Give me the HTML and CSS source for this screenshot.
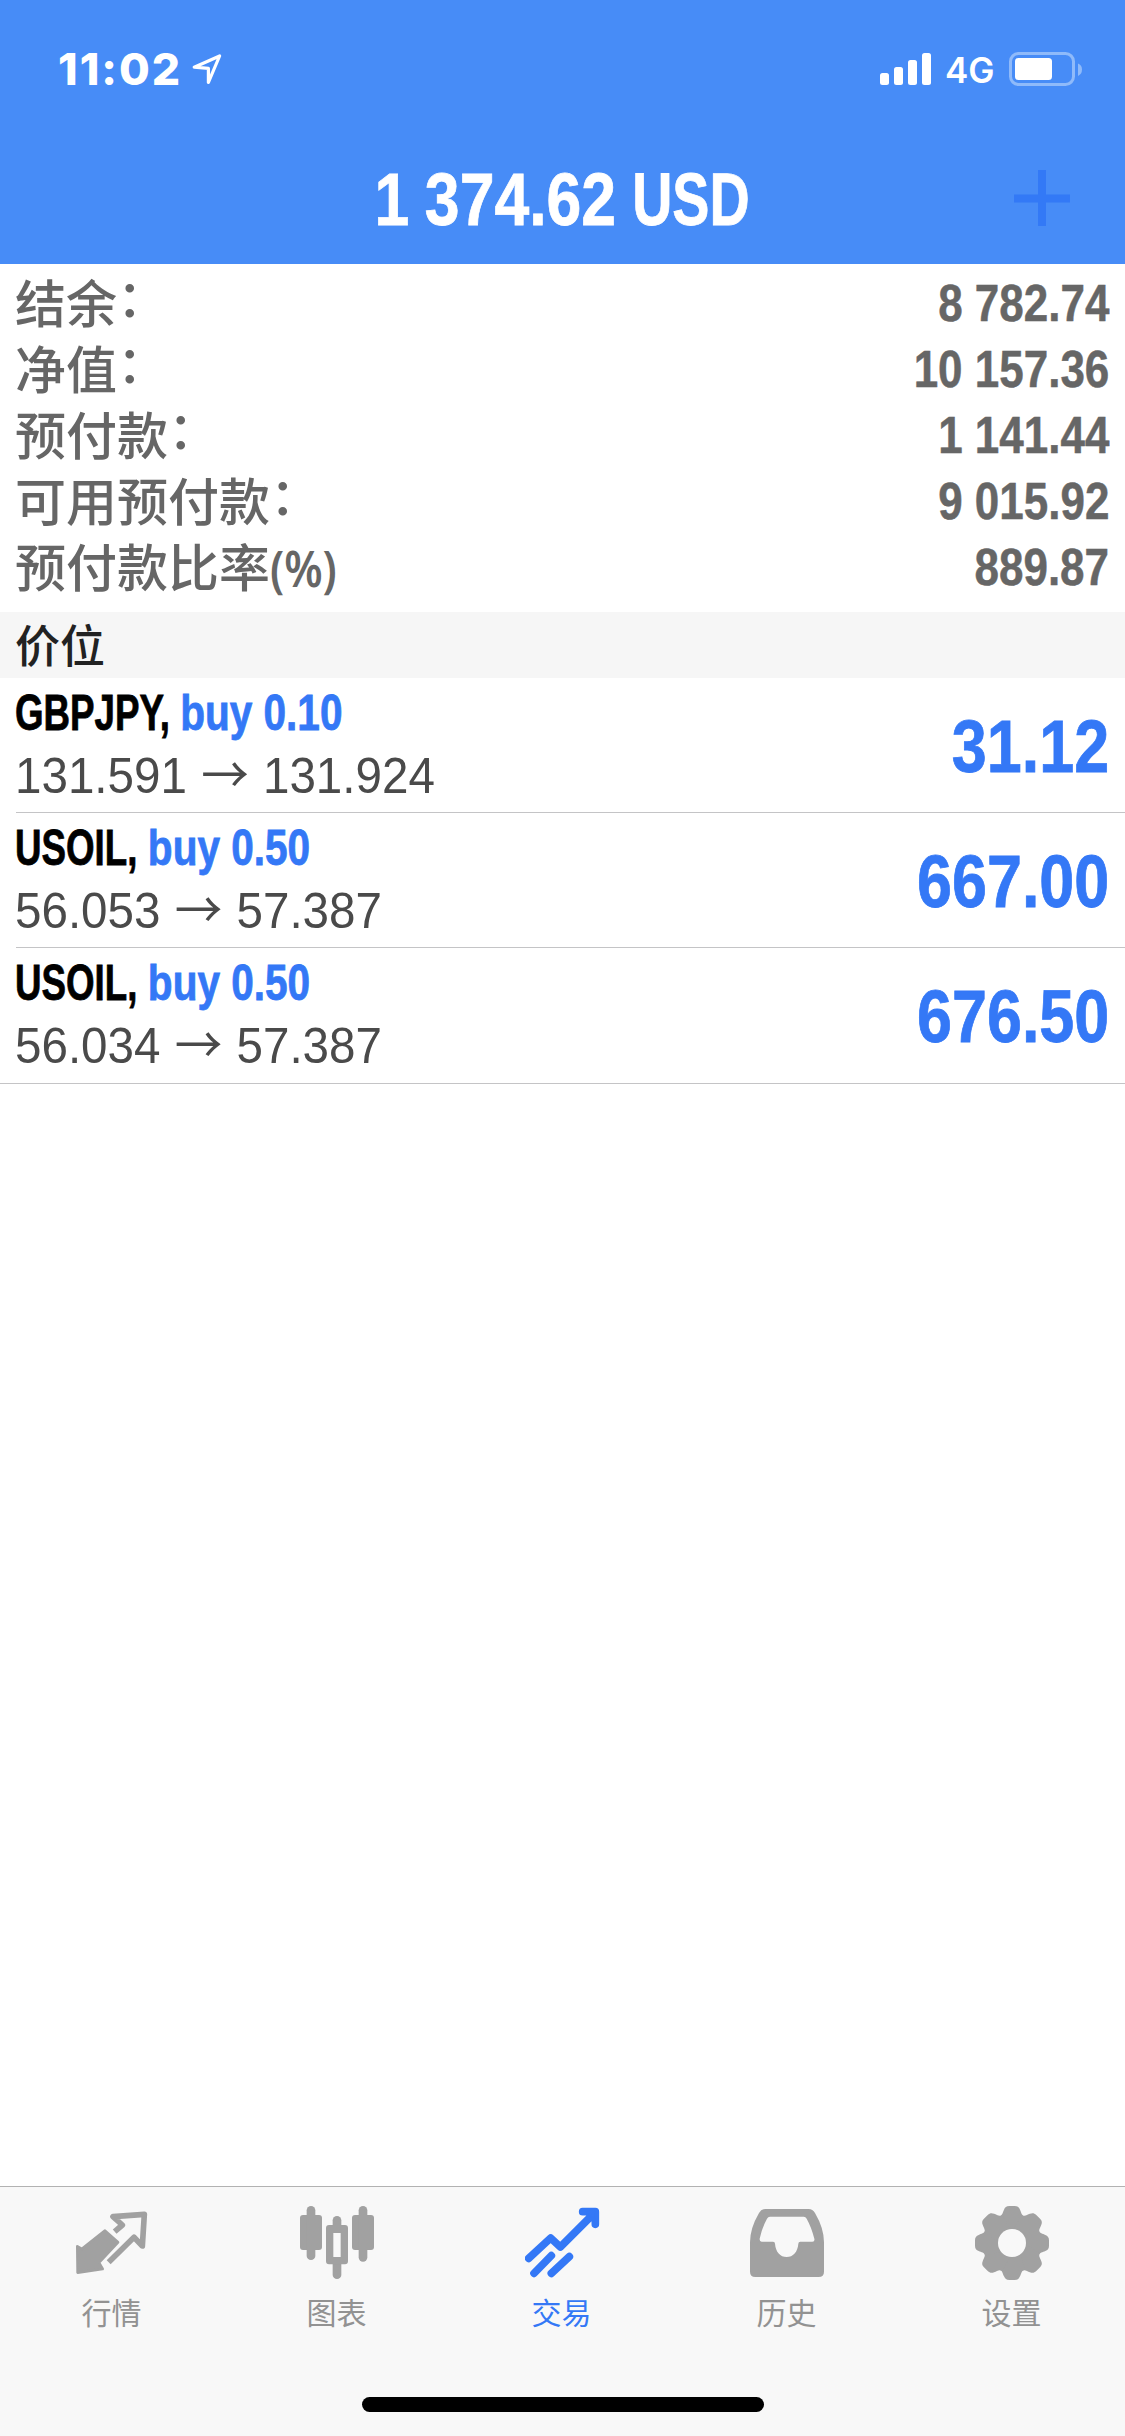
FILE: index.html
```html
<!DOCTYPE html>
<html lang="zh-CN">
<head>
<meta charset="utf-8">
<title>交易</title>
<link rel="stylesheet" href="styles.css">
</head>
<body>
<div class="app">
  <header class="header">
    <div class="status">
      <span class="clock">11:02</span>
      <svg class="location" viewBox="0 0 30 32" width="30" height="32"><path d="M2.2 14.2 27.6 3 16.4 29.4V15.4Z" fill="none" stroke="#fff" stroke-width="3.2" stroke-linejoin="round"/></svg>
      <svg class="signal" viewBox="0 0 52 32" width="52" height="32" fill="#fff"><rect x="0" y="20" width="9" height="12" rx="2.5"/><rect x="14" y="14" width="9" height="18" rx="2.5"/><rect x="28" y="7" width="9" height="25" rx="2.5"/><rect x="42" y="0" width="9" height="32" rx="2.5"/></svg>
      <span class="network">4G</span>
      <svg class="battery" viewBox="0 0 74 34" width="74" height="34"><rect x="1.5" y="1.5" width="63" height="31" rx="8" fill="none" stroke="#8fbafa" stroke-width="3"/><rect x="6" y="6" width="37" height="22" rx="3.5" fill="#fff"/><path d="M69 11.5Q73 13 73 17.5T69 24Z" fill="#8fbafa"/></svg>
    </div>
    <div class="nav">
      <h1 class="nav-title"><span class="condensed">1 374.62 <span class="currency">USD</span></span></h1>
      <svg class="add" viewBox="0 0 58 58" width="58" height="58"><path d="M29 1V57M1 29.500H57" stroke="#3379f6" stroke-width="8"/></svg>
    </div>
  </header>

  <section class="summary">
    <div class="line"><span class="label">结余<span class="colon">：</span></span><span class="amount">8 782.74</span></div>
    <div class="line"><span class="label">净值<span class="colon">：</span></span><span class="amount">10 157.36</span></div>
    <div class="line"><span class="label">预付款<span class="colon">：</span></span><span class="amount">1 141.44</span></div>
    <div class="line"><span class="label">可用预付款<span class="colon">：</span></span><span class="amount">9 015.92</span></div>
    <div class="line"><span class="label">预付款比率<span class="unit">(%)</span></span><span class="amount">889.87</span></div>
  </section>

  <h2 class="section-title">价位</h2>
  <ul class="deals">
    <li class="deal">
      <div class="info">
        <div class="name">GBPJPY, <span class="side">buy 0.10</span></div>
        <div class="prices">131.591<span class="to">→</span>131.924</div>
      </div>
      <div class="profit">31.12</div>
    </li>
    <li class="deal">
      <div class="info">
        <div class="name">USOIL, <span class="side">buy 0.50</span></div>
        <div class="prices">56.053<span class="to">→</span>57.387</div>
      </div>
      <div class="profit">667.00</div>
    </li>
    <li class="deal">
      <div class="info">
        <div class="name">USOIL, <span class="side">buy 0.50</span></div>
        <div class="prices">56.034<span class="to">→</span>57.387</div>
      </div>
      <div class="profit">676.50</div>
    </li>
  </ul>

  <footer class="footer">
    <nav class="tabs">
      <div class="tab">
        <svg class="icon" viewBox="0 0 225 225"><path d="M90 77 129 112 72 173 83 192 8 203 7 124 20 132Z" fill="currentColor" stroke="currentColor" stroke-width="8" stroke-linejoin="round"/><path d="M119 80 142 60 114 35 208 28 202 123 177 97 101 172" fill="none" stroke="currentColor" stroke-width="17" stroke-linejoin="round"/></svg>
        <span>行情</span>
      </div>
      <div class="tab">
        <svg class="icon" viewBox="0 0 225 225" fill="currentColor"><rect y="30" width="66" height="105" rx="9"/><rect x="20" y="3" width="26" height="162" rx="13"/><rect x="98" y="33" width="26" height="50" rx="13"/><rect x="98" y="160" width="26" height="62" rx="13"/><path fill-rule="evenodd" d="M87 60H135Q144 60 144 69V169Q144 178 135 178H87Q78 178 78 169V69Q78 60 87 60ZM100 84V156H122V84Z"/><rect x="156" y="30" width="66" height="105" rx="9"/><rect x="176" y="3" width="26" height="167" rx="13"/></svg>
        <span>图表</span>
      </div>
      <div class="tab active">
        <svg class="icon" viewBox="0 0 225 225" fill="none" stroke="currentColor" stroke-width="23" stroke-linecap="round" stroke-linejoin="round"><path d="M11 160 77 99 106 126 205 27M173 20H211V58M27 205 79 152M79 205 133 155"/><path d="M185 22H210V47Z" fill="currentColor" stroke-width="4"/></svg>
        <span>交易</span>
      </div>
      <div class="tab">
        <svg class="icon" viewBox="0 0 225 225" fill="currentColor"><path fill-rule="evenodd" d="M46 12H176Q188 12 195 24Q222 70 222 112V200Q222 216 206 216H16Q0 216 0 200V112Q0 70 27 24Q34 12 46 12ZM60 35Q54 35 51 41Q37 66 29 101Q28 110 35 110H69Q75 110 75 116C77 141 91 156 110 156S143 141 145 116Q145 110 151 110H187Q195 110 193 101Q184 66 170 41Q167 35 161 35Z"/></svg>
        <span>历史</span>
      </div>
      <div class="tab">
        <svg class="icon" viewBox="0 0 225 225" fill="currentColor"><defs><path id="tooth" d="M-38-80C-28-83-28-92-24-100C-21-107-17-111-8-111H8C17-111 21-107 24-100C28-92 28-83 38-80L28-38H-28Z"/></defs><g transform="translate(111 114)"><circle r="64" fill="none" stroke="currentColor" stroke-width="44"/><use href="#tooth"/><use href="#tooth" transform="rotate(45)"/><use href="#tooth" transform="rotate(90)"/><use href="#tooth" transform="rotate(135)"/><use href="#tooth" transform="rotate(180)"/><use href="#tooth" transform="rotate(225)"/><use href="#tooth" transform="rotate(270)"/><use href="#tooth" transform="rotate(315)"/><circle r="42" fill="#f8f8f8"/></g></svg>
        <span>设置</span>
      </div>
    </nav>
    <div class="home-indicator"></div>
  </footer>
</div>
</body>
</html>
```
FILE: styles.css
```css
* { box-sizing: border-box; margin: 0; padding: 0; }

body {
  width: 1125px;
  background: #fff;
  font-family: "Liberation Sans", "Noto Sans CJK SC", sans-serif;
}

.app { display: flex; flex-direction: column; height: 2436px; }

/* Header */
.header { height: 264px; background: #478cf7; color: #fff; }

.status {
  display: flex;
  align-items: center;
  height: 138px;
  padding: 0 42px 0 58px;
  font-family: Inter, "Liberation Sans", sans-serif;
}
.clock { width: 123px; font-size: 44.5px; font-weight: 800; line-height: 44px; letter-spacing: 2px; white-space: nowrap; }
.location { margin-left: 11px; }
.signal { margin-left: auto; }
.network { width: 50px; margin: 2px 14px 0 13px; font-size: 35px; font-weight: 600; line-height: 40px; white-space: nowrap; }

.nav {
  display: grid;
  grid-template-columns: 1fr auto 1fr;
  align-items: center;
  height: 120px;
  padding-right: 54px;
}
.nav-title { grid-column: 2; margin: 3px 0 0 53px; font-size: 74px; line-height: 84px; white-space: nowrap; }
.condensed { display: block; word-spacing: -2px; transform: scaleX(0.845); -webkit-text-stroke: 0.8px; }
.currency { display: inline-block; margin-right: -17px; transform: scaleX(0.89); transform-origin: left; }
.add { justify-self: end; }

/* Account summary */
.summary { height: 348px; padding: 6px 16px 0 15px; color: #666; }
.line { display: flex; justify-content: space-between; height: 66px; line-height: 66px; white-space: nowrap; }
.label { margin-top: -2px; font-family: "Noto Sans CJK SC", sans-serif; font-size: 51px; font-weight: 500; }
.colon { display: inline-block; transform: translateY(-6px); }
.unit { display: inline-block; font-family: "Noto Sans", sans-serif; font-size: 51px; font-weight: 600; transform: scaleX(0.86); transform-origin: left; }
.amount { font-size: 52px; font-weight: 700; transform: scaleX(0.846); transform-origin: right; -webkit-text-stroke: 0.5px; }

.section-title {
  height: 66px;
  padding-left: 15px;
  background: #f6f6f6;
  color: #222;
  font: 500 45px/64px "Noto Sans CJK SC", sans-serif;
}

/* Open positions */
.deals { list-style: none; border-bottom: 1px solid #c4c4c6; }
.deal {
  display: flex;
  justify-content: space-between;
  height: 135px;
  margin-left: 16px;
  padding-right: 16px;
  border-bottom: 1px solid #c4c4c6;
  white-space: nowrap;
}
.deal:last-child { border-bottom: 0; }
.info { margin-left: -1px; }
.name { height: 68px; font-size: 50px; font-weight: 700; line-height: 70px; transform: scaleX(0.734); transform-origin: left; -webkit-text-stroke: 0.8px; }
.side { display: inline-block; color: #3478f6; transform: scaleX(1.105); transform-origin: left; }
.prices { height: 58px; color: #4a4a4a; font-size: 50px; line-height: 58px; transform: scaleX(0.951); transform-origin: left; }
.to { margin: 0 15px 0 15px; font-family: "Noto Sans CJK SC", sans-serif; font-weight: 400; line-height: 1; }
.profit { color: #3478f6; font-size: 74px; font-weight: 700; line-height: 138px; transform: scaleX(0.85); transform-origin: right; -webkit-text-stroke: 0.8px; }

/* Tab bar */
.footer {
  display: flex;
  flex-direction: column;
  justify-content: space-between;
  align-items: center;
  height: 250px;
  margin-top: auto;
  padding-bottom: 24px;
  border-top: 1px solid #b2b2b2;
  background: #f8f8f8;
}
.tabs { display: flex; width: 1125px; padding-top: 18px; }
.tab { display: flex; flex: 1; flex-direction: column; align-items: center; color: #a1a1a1; }
.tab span { margin: 9px 2px 0 0; color: #929292; font: 30px/44px "Noto Sans CJK SC", sans-serif; }
.tab.active, .tab.active span { color: #3478f6; }
.icon { width: 75px; height: 75px; }
.home-indicator { width: 402px; height: 15px; border-radius: 8px; background: #000; }
```
